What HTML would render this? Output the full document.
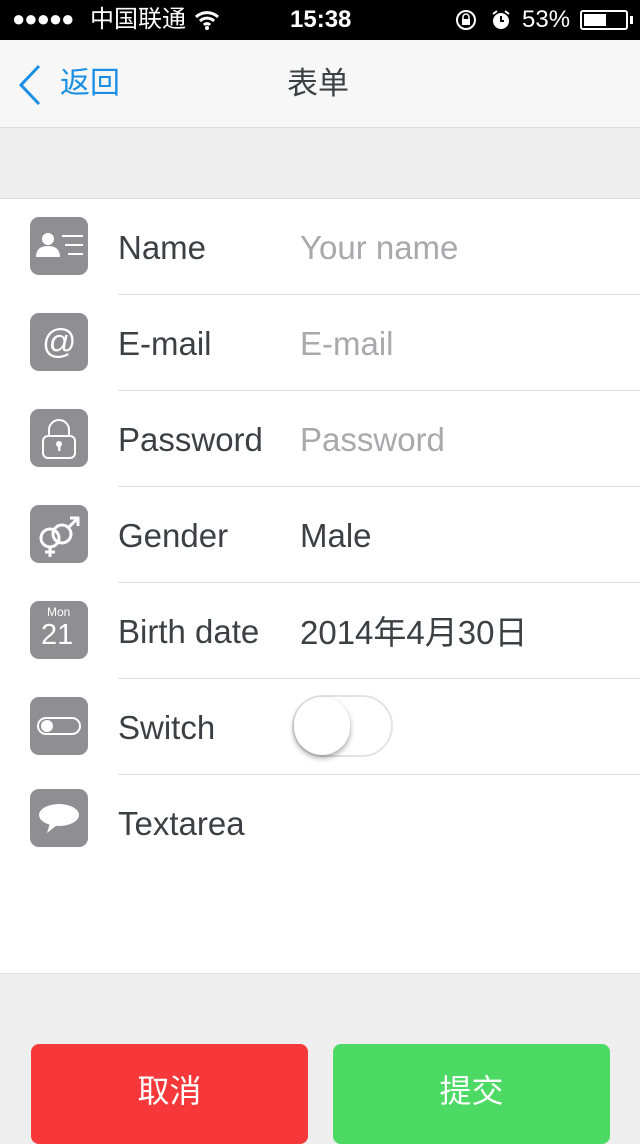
<!DOCTYPE html>
<html><head><meta charset="utf-8"><style>
*{margin:0;padding:0;box-sizing:border-box}
body{width:640px;height:1136px;overflow:hidden;font-family:"Liberation Sans","Noto Sans CJK SC",sans-serif;position:relative;background:#eeeeee}
span{line-height:1.15}
.sb{position:absolute;top:0;left:0;width:640px;height:40px;background:#000;color:#fff;font-size:24px}
.sb span{line-height:28px}
.nav{position:absolute;top:40px;left:0;width:640px;height:88px;background:#f7f7f7;border-bottom:1px solid #dcdcdc}
.nav span{line-height:36px}
.list{position:absolute;top:198px;left:0;width:640px;height:776px;background:#fff;border-top:1px solid #ddd;border-bottom:1px solid #ddd}
.row{position:absolute;left:0;width:640px;height:96px}
.row .ic{position:absolute;left:30px;top:18px;width:58px;height:58px;border-radius:9px;background:#8e8e93}
.row .lb{position:absolute;left:118px;top:31px;font-size:33px;color:#3d3f44;line-height:36px}
.row .v{position:absolute;left:300px;top:31px;font-size:33px;color:#3d3f44;line-height:36px}
.row .ph{color:#a8a8ad}
.row .ln{position:absolute;left:118px;right:0;bottom:0;height:1px;background:#dedede}
.btn{position:absolute;top:1044px;width:277px;height:100px;border-radius:8px;color:#fff;font-size:32px;text-align:center;line-height:94px}
</style></head><body>
<div class="sb">
<span style="position:absolute;left:12px;top:5px;letter-spacing:-1px;font-size:22px">●●●●●</span>
<span style="position:absolute;left:90px;top:6px">中国联通</span>
<svg style="position:absolute;left:194px;top:10px" width="26" height="20" viewBox="0 0 26 20"><path d="M2 7a16 16 0 0 1 22 0M6 11a10 10 0 0 1 14 0M10 15a4 4 0 0 1 6 0" stroke="#fff" stroke-width="3" fill="none"/><circle cx="13" cy="18" r="2" fill="#fff"/></svg>
<span style="position:absolute;left:290px;top:6px;font-weight:bold">15:38</span>
<svg style="position:absolute;left:455px;top:9px" width="24" height="22"><circle cx="11" cy="11" r="9" stroke="#fff" stroke-width="2" fill="none"/><rect x="7" y="10" width="8" height="6" fill="#fff"/><path d="M8 10V8a3 3 0 0 1 6 0v2" stroke="#fff" stroke-width="1.5" fill="none"/></svg>
<svg style="position:absolute;left:490px;top:9px" width="22" height="22"><circle cx="11" cy="12" r="8" fill="#fff"/><path d="M11 7v5h3" stroke="#000" stroke-width="2" fill="none"/><path d="M3 5l4-3M19 5l-4-3" stroke="#fff" stroke-width="2"/></svg>
<span style="position:absolute;left:522px;top:6px">53%</span>
<div style="position:absolute;left:580px;top:10px;width:48px;height:20px;border:2px solid #fff;border-radius:3px"><div style="position:absolute;left:2px;top:2px;width:22px;height:12px;background:#fff"></div></div>
<div style="position:absolute;left:630px;top:16px;width:3px;height:8px;background:#fff"></div>
</div>
<div class="nav">
<svg style="position:absolute;left:18px;top:24px" width="24" height="42"><path d="M21 2L3 21l18 19" stroke="#1a8fe3" stroke-width="3" fill="none"/></svg>
<span style="position:absolute;left:60px;top:26px;font-size:30px;color:#1a8fe3">返回</span>
<span style="position:absolute;left:287px;top:26px;font-size:31px;color:#3d3f44">表单</span>
</div>
<div class="list">
<div class="row" style="top:0"><div class="ic"><svg width="58" height="58"><circle cx="18" cy="22" r="6" fill="#fff"/><path d="M6 40c0-8 5-11 12-11s12 3 12 11z" fill="#fff"/><path d="M32 19h21M35 28h18M38 37h15" stroke="#fff" stroke-width="2"/></svg></div><span class="lb">Name</span><span class="v ph">Your name</span><div class="ln"></div></div>
<div class="row" style="top:96px"><div class="ic"><span style="position:absolute;left:12px;top:10px;color:#fff;font-size:34px">@</span></div><span class="lb">E-mail</span><span class="v ph">E-mail</span><div class="ln"></div></div>
<div class="row" style="top:192px"><div class="ic"><svg width="58" height="58"><path d="M19 27v-6a10 10 0 0 1 20 0v6" stroke="#fff" stroke-width="2" fill="none"/><rect x="13" y="27" width="32" height="22" rx="5" stroke="#fff" stroke-width="2" fill="none"/><circle cx="29" cy="35" r="3" fill="#fff"/><rect x="28" y="35" width="2.5" height="7" fill="#fff"/></svg></div><span class="lb">Password</span><span class="v ph">Password</span><div class="ln"></div></div>
<div class="row" style="top:288px"><div class="ic"><svg width="58" height="58"><circle cx="20" cy="33" r="9" stroke="#fff" stroke-width="3" fill="none"/><circle cx="32" cy="29" r="9" stroke="#fff" stroke-width="3" fill="none"/><path d="M20 42v10M15 47h10M38 23l9-9M40 13h8v8" stroke="#fff" stroke-width="3" fill="none"/></svg></div><span class="lb">Gender</span><span class="v">Male</span><div class="ln"></div></div>
<div class="row" style="top:384px"><div class="ic"><span style="position:absolute;left:17px;top:5px;color:#fff;font-size:12px">Mon</span><span style="position:absolute;left:11px;top:18px;color:#fff;font-size:29px">21</span></div><span class="lb">Birth date</span><span class="v" style="top:32px">2014年4月30日</span><div class="ln"></div></div>
<div class="row" style="top:480px"><div class="ic"><div style="position:absolute;left:7px;top:20px;width:44px;height:18px;border:2px solid #fff;border-radius:9px"></div><div style="position:absolute;left:11px;top:23px;width:12px;height:12px;border-radius:6px;background:#fff"></div></div><span class="lb">Switch</span>
<div style="position:absolute;left:292px;top:16px;width:101px;height:62px;border:2px solid #e3e3e3;border-radius:31px"></div>
<div style="position:absolute;left:294px;top:18px;width:56px;height:58px;border-radius:29px;background:#fff;box-shadow:0 3px 6px rgba(0,0,0,.35)"></div>
<div class="ln"></div></div>
<div class="row" style="top:576px"><div class="ic" style="top:14px"><svg width="58" height="58"><ellipse cx="29" cy="26" rx="20" ry="11" fill="#fff"/><path d="M20 34l-3 10 10-8z" fill="#fff"/></svg></div><span class="lb">Textarea</span></div>
</div>
<div class="btn" style="left:31px;background:#f7383a">取消</div>
<div class="btn" style="left:333px;background:#4cd964">提交</div>
</body></html>
